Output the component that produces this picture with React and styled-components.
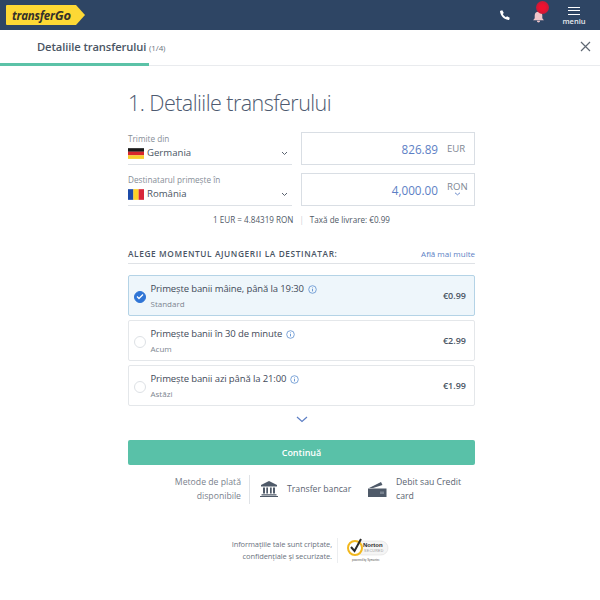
import React from "react";
import styled, { createGlobalStyle } from "styled-components";

const Global = createGlobalStyle`
  html, body { margin: 0; padding: 0; background: #fff; }
  body { font-family: "Open Sans", "Noto Sans", "Liberation Sans", sans-serif; color: #3d4a5c; }
`;
const Page = styled.div`width: 600px; height: 600px; overflow: hidden; display: flex; flex-direction: column;`;
const TopBar = styled.header`
  height: 30px; flex: none; background: #2e4564; display: flex; align-items: center; padding: 0 15px 0 6px;
`;
const Logo = styled.div`
  width: 79px; height: 20px; position: relative; margin-right: auto; display: flex; align-items: center;
  padding-left: 6px; box-sizing: border-box;
`;
const LogoShape = styled.svg`position: absolute; left: 0; top: 0;`;
const LogoText = styled.span`
  position: relative; font: italic 700 11.5px "Open Sans", sans-serif; color: #33302a; letter-spacing: -0.2px;
`;
const LogoGo = styled.span`font-size: 13px;`;
const TopIcons = styled.div`display: flex; align-items: center;`;
const Phone = styled.svg`margin-right: 21px; margin-top: -1px;`;
const BellWrap = styled.div`position: relative; width: 13px; height: 13px; margin-right: 18px; margin-top: -5px;`;
const Badge = styled.span`
  position: absolute; right: -4px; top: -5px; width: 13px; height: 13px; border-radius: 50%;
  background: radial-gradient(circle, #f0112f 30%, #a8223f 100%);
`;
const Menu = styled.div`display: flex; flex-direction: column; align-items: center; width: 22px; gap: 2px; margin-top: 2px;`;
const MenuLines = styled.div`
  width: 12px; height: 8px; border-top: 1.5px solid #fff; border-bottom: 1.5px solid #fff; position: relative; box-sizing: border-box;
  &::after { content: ""; position: absolute; left: 0; right: 0; top: 1.75px; height: 1.5px; background: #fff; }
`;
const MenuLabel = styled.span`font-size: 7.5px; line-height: 8px; font-weight: 600; color: #e8ebef;`;
const SubBar = styled.div`
  height: 36px; flex: none; position: relative; display: flex; align-items: center; justify-content: space-between;
  padding: 0 9px 2px 37px; box-sizing: border-box; border-bottom: 1px solid #e9ebee;
`;
const Progress = styled.div`position: absolute; left: 0; bottom: -1px; height: 3px; background: #5bc2a7;`;
const SubTitle = styled.div`font-size: 11.2px; font-weight: 600; color: #4a5564; letter-spacing: -0.1px;`;
const SubCount = styled.span`font-size: 8px; font-weight: 400; color: #6b7380;`;
const Main = styled.main`width: 347px; margin-left: 128px; display: flex; flex-direction: column;`;
const Heading = styled.h1`
  margin: 24px 0 0; font-size: 21.5px; line-height: 26px; font-weight: 300; color: #4d5a70; letter-spacing: -0.55px;
`;
const Calc = styled.div`display: grid; grid-template-columns: 164px 174px; column-gap: 9px; row-gap: 8px; margin-top: 16px;`;
const Select = styled.div`
  height: 33px; box-sizing: border-box; border-bottom: 1px solid #dde1e6; display: flex; flex-direction: column; position: relative;
`;
const SelectLabel = styled.div`font-size: 8.2px; line-height: 11px; color: #868d97; margin-top: 1px;`;
const SelectValue = styled.div`display: flex; align-items: center; gap: 3px; font-size: 9.6px; line-height: 16px; color: #4a5564; margin-top: 1px;`;
const Caret = styled.svg`position: absolute; right: 4px; top: 19px;`;
const Amount = styled.div`
  height: 33px; box-sizing: border-box; border: 1px solid #d9dee4; display: flex; align-items: center; justify-content: flex-end; position: relative;
`;
const AmountValue = styled.span`font-size: 11.7px; color: #5d7fc5; margin-right: 9px;`;
const Currency = styled.span`
  font-size: 9.6px; color: #7f8894; width: 27px; margin-top: ${p => (p.$raised ? "-7px" : "0")};
`;
const CurrencyCaret = styled.svg`position: absolute; right: 13px; bottom: 9px;`;
const Rate = styled.div`
  display: flex; justify-content: center; align-items: center; gap: 6px; margin-top: 7px; font-size: 8.1px; line-height: 14px; color: #4f5966; font-weight: 500;
`;
const Pipe = styled.span`color: #aab0b8; font-weight: 300;`;
const SectionHead = styled.div`
  display: flex; justify-content: space-between; align-items: baseline; margin-top: 19px; padding-bottom: 2px; border-bottom: 1px solid #dfe2e6;
`;
const SectionTitle = styled.div`font-size: 8.3px; line-height: 15px; font-weight: 600; letter-spacing: 0.6px; color: #4a5564;`;
const SectionLink = styled.span`font-size: 8px; color: #5d7fc5;`;
const Options = styled.div`display: flex; flex-direction: column; gap: 4px; margin-top: 11px;`;
const Option = styled.div`
  height: 41px; box-sizing: border-box; display: flex; align-items: center; padding: 0 8px 0 4.5px; border-radius: 2px;
  border: 1px solid ${p => (p.$active ? "#b4d3e6" : "#e4e7ea")};
  background: ${p => (p.$active ? "#eef6fb" : "#fff")};
`;
const Radio = styled.span`
  width: 12px; height: 12px; flex: none; border-radius: 50%; box-sizing: border-box; display: flex; align-items: center; justify-content: center;
  margin-top: 2px; background: ${p => (p.$active ? "#2f75d6" : "#fff")};
  border: 1px solid ${p => (p.$active ? "#2f75d6" : "#dde1e5")};
`;
const OptionBody = styled.div`flex: 1; margin: 1px 0 0 5px; display: flex; flex-direction: column; gap: 2px;`;
const OptionTitle = styled.div`display: flex; align-items: center; gap: 4px; font-size: 9.5px; line-height: 14px; font-weight: 500; color: #3f4a59; letter-spacing: -0.12px;`;
const OptionSub = styled.div`font-size: 8px; line-height: 12px; color: #7d8590;`;
const Price = styled.div`font-size: 9px; font-weight: 600; color: #4a5564;`;
const More = styled.div`display: flex; justify-content: center; margin-top: 10px;`;
const Continue = styled.button`
  height: 25px; margin-top: 17px; border: 0; border-radius: 2px; background: #59c1a8; color: #fff; font: 600 9px "Open Sans", sans-serif; padding: 0;
`;
const Methods = styled.div`display: flex; align-items: center; margin-top: 9px; height: 30px;`;
const MethodsLabel = styled.div`
  width: 81px; margin-left: 32px; padding-right: 8px; text-align: right; font-size: 8.7px; line-height: 14.5px; color: #7a828d; border-right: 1px solid #e0e3e7;
`;
const Method = styled.div`display: flex; align-items: center; gap: 9px; font-size: 8.7px; line-height: 14.5px; font-weight: 500; color: #5a6370;`;
const BankMethod = styled(Method)`margin-left: 10px; width: 108px;`;
const CardMethod = styled(Method)`width: 96px;`;
const Secure = styled.div`display: flex; justify-content: flex-end; align-items: center; margin-top: 33px; width: 262px;`;
const SecureText = styled.div`
  text-align: right; font-size: 7.5px; line-height: 12.5px; letter-spacing: -0.1px; color: #6b7380; padding-right: 5px; border-right: 1px solid #eceef0; margin-right: 8px;
`;
const Norton = styled.svg`flex: none;`;
const NortonWord = styled.text`font: 700 6px "Liberation Sans", sans-serif; fill: #2d2d2d;`;
const NortonSecured = styled.text`font: 400 3.6px "Liberation Sans", sans-serif; fill: #9a9a9a; letter-spacing: 0.3px;`;
const NortonFoot = styled.text`font: 400 2.8px "Liberation Sans", sans-serif; fill: #555;`;

const Info = () => (
  <svg width="9" height="9" viewBox="0 0 9 9" fill="none">
    <circle cx="4.5" cy="4.5" r="3.8" stroke="#5d8fcf" strokeWidth="0.8" />
    <path d="M4.5 4v2.4M4.5 2.5v.8" stroke="#5d8fcf" strokeWidth="0.9" />
  </svg>
);
const SmallCaret = () => (
  <Caret width="7" height="5" viewBox="0 0 7 5" fill="none">
    <path d="M1 1l2.5 2.5L6 1" stroke="#5a6370" strokeWidth="1" />
  </Caret>
);
const Flag = ({ colors, horizontal }) => (
  <svg width="16" height="11" viewBox="0 0 15 10" style={{ flex: "none" }}>
    {colors.map((c, i) =>
      horizontal
        ? <rect key={c} x="0" y={(i * 10) / 3} width="15" height="3.4" fill={c} />
        : <rect key={c} x={i * 5} y="0" width="5.1" height="10" fill={c} />
    )}
  </svg>
);
const options = [
  { title: "Primește banii mâine, până la 19:30", sub: "Standard", price: "€0.99", active: true },
  { title: "Primește banii în 30 de minute", sub: "Acum", price: "€2.99" },
  { title: "Primește banii azi până la 21:00", sub: "Astăzi", price: "€1.99" },
];

export default function App() {
  return (
    <Page>
      <Global />
      <TopBar>
        <Logo>
          <LogoShape width="79" height="20" viewBox="0 0 79 20">
            <path d="M1 0H70L79 10L70 20H1a1 1 0 0 1-1-1V1a1 1 0 0 1 1-1Z" fill="#fdd835" />
          </LogoShape>
          <LogoText>transfer<LogoGo>Go</LogoGo></LogoText>
        </Logo>
        <TopIcons>
          <Phone width="12" height="12" viewBox="0 0 24 24">
            <path fill="#fff" d="M6.6 2.5 9.6 8 7.6 10.2c1.2 2.6 3.6 5 6.2 6.2l2.2-2 5.5 3-.9 3.6c-.2.8-1 1.2-1.8 1.1C10 20.900 3.100 14 2 5.200c-.1-.8.3-1.600 1.100-1.800Z" />
          </Phone>
          <BellWrap>
            <svg width="13" height="13" viewBox="0 0 24 24" fill="#f1c5c9">
              <path d="M12 3a7 7 0 0 0-7 7v5l-3 4h20l-3-4v-5a7 7 0 0 0-7-7Zm-3 17a3 3 0 0 0 6 0Z" />
            </svg>
            <Badge />
          </BellWrap>
          <Menu>
            <MenuLines />
            <MenuLabel>meniu</MenuLabel>
          </Menu>
        </TopIcons>
      </TopBar>
      <SubBar>
        <SubTitle>Detaliile transferului <SubCount>(1/4)</SubCount></SubTitle>
        <svg width="11" height="11" viewBox="0 0 11 11" fill="none">
          <path d="M1 1l9 9M10 1l-9 9" stroke="#5f6873" strokeWidth="1.200" />
        </svg>
        <Progress style={{ width: "149px" }} />
      </SubBar>
      <Main>
        <Heading>1. Detaliile transferului</Heading>
        <Calc>
          <Select>
            <SelectLabel>Trimite din</SelectLabel>
            <SelectValue><Flag horizontal colors={["#1a1a1a", "#d8262c", "#f7ce2c"]} />Germania</SelectValue>
            <SmallCaret />
          </Select>
          <Amount><AmountValue>826.89</AmountValue><Currency>EUR</Currency></Amount>
          <Select>
            <SelectLabel>Destinatarul primește în</SelectLabel>
            <SelectValue><Flag colors={["#1c4aa8", "#fbd126", "#d8263a"]} />România</SelectValue>
            <SmallCaret />
          </Select>
          <Amount>
            <AmountValue>4,000.00</AmountValue><Currency $raised>RON</Currency>
            <CurrencyCaret width="7" height="4" viewBox="0 0 7 4" fill="none"><path d="M1 .8l2.500 2L6 .8" stroke="#5d7fc5" strokeWidth="0.9" /></CurrencyCaret>
          </Amount>
        </Calc>
        <Rate><span>1 EUR = 4.84319 RON</span><Pipe>|</Pipe><span>Taxă de livrare: €0.99</span></Rate>
        <SectionHead>
          <SectionTitle>ALEGE MOMENTUL AJUNGERII LA DESTINATAR:</SectionTitle>
          <SectionLink>Află mai multe</SectionLink>
        </SectionHead>
        <Options>
          {options.map(o => (
            <Option key={o.sub} $active={o.active}>
              <Radio $active={o.active}>
                {o.active && <svg width="8" height="7" viewBox="0 0 8 7" fill="none"><path d="M1 3.500l2 2 4-4" stroke="#fff" strokeWidth="1.300" /></svg>}
              </Radio>
              <OptionBody>
                <OptionTitle>{o.title}<Info /></OptionTitle>
                <OptionSub>{o.sub}</OptionSub>
              </OptionBody>
              <Price>{o.price}</Price>
            </Option>
          ))}
        </Options>
        <More>
          <svg width="12" height="7" viewBox="0 0 12 7" fill="none"><path d="M1 1l5 4.500L11 1" stroke="#5d7fc5" strokeWidth="1.200" /></svg>
        </More>
        <Continue>Continuă</Continue>
        <Methods>
          <MethodsLabel>Metode de plată disponibile</MethodsLabel>
          <BankMethod>
            <svg width="18" height="16" viewBox="0 0 18 16" fill="#4f5a69" style={{ flex: "none" }}>
              <path d="M9 0 1 4v1.500h16V4ZM3 6.500h2v6H3ZM6.300 6.500h1.700v6H6.300ZM10 6.500h1.700v6H10ZM13 6.500h2v6h-2ZM1.500 13.200h15V14.500h-15ZM0 15h18v1H0Z" />
            </svg>
            Transfer bancar
          </BankMethod>
          <CardMethod>
            <svg width="19" height="16" viewBox="0 0 19 16" fill="#4f5a69" style={{ flex: "none" }}>
              <path d="M1 7 13 1l1.500 3L5 7ZM0 7.500h18.500V16H0Z" />
              <rect x="12" y="10.500" width="4" height="2.500" fill="#7a8491" />
            </svg>
            Debit sau Credit card
          </CardMethod>
        </Methods>
        <Secure>
          <SecureText>Informațiile tale sunt criptate,<br />confidențiale și securizate.</SecureText>
          <Norton width="44" height="26" viewBox="0 0 44 26">
            <rect x="9" y="4" width="33" height="14" rx="7" fill="#f5f5f5" stroke="#d8d8d8" strokeWidth="0.5" />
            <circle cx="9" cy="11" r="7" fill="#fff" stroke="#f2b81e" strokeWidth="2" />
            <path d="M5 10l3.500 4L15 2" fill="none" stroke="#2b2b2b" strokeWidth="2" />
            <NortonWord x="17" y="10">Norton</NortonWord>
            <NortonSecured x="18" y="15">SECURED</NortonSecured>
            <NortonFoot x="6" y="24">powered by Symantec</NortonFoot>
          </Norton>
        </Secure>
      </Main>
    </Page>
  );
}
